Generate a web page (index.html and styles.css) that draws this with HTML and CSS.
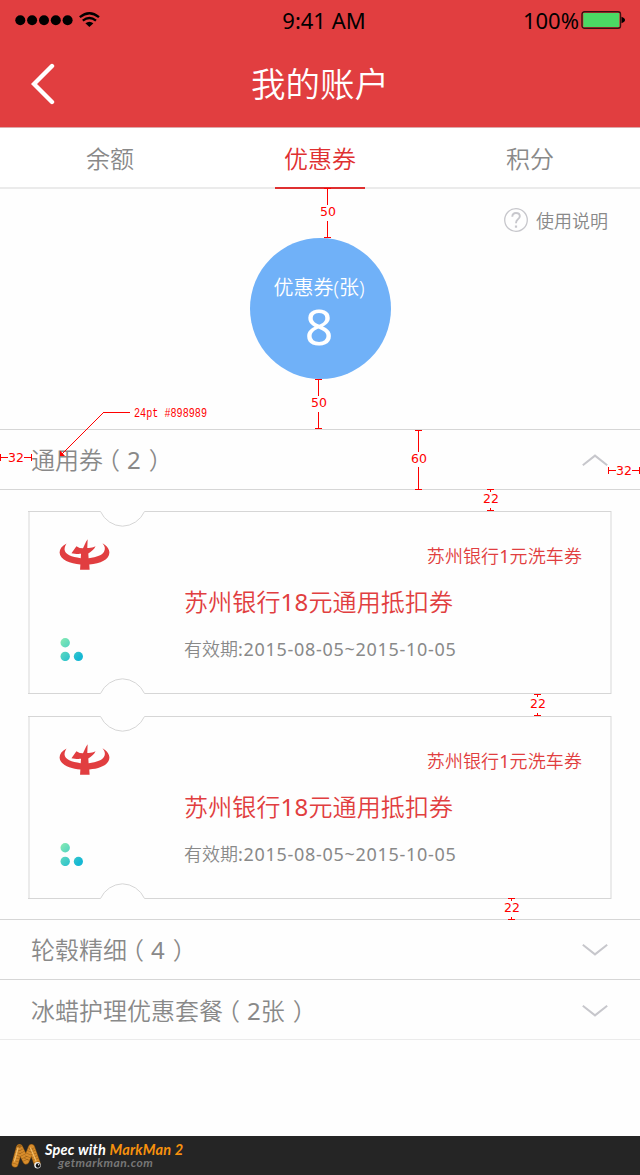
FILE: index.html
```html
<!DOCTYPE html>
<html lang="zh-CN">
<head>
<meta charset="utf-8">
<title>我的账户</title>
<link rel="stylesheet" href="styles.css">
</head>
<body>
<svg class="defs" width="0" height="0" aria-hidden="true">
  <defs>
    <linearGradient id="dotGradient" gradientUnits="userSpaceOnUse" x1="2" y1="2" x2="20" y2="20">
      <stop offset="0" stop-color="#81e8b4"/><stop offset="1" stop-color="#16b8d4"/>
    </linearGradient>
    <symbol id="bank" viewBox="118 116 153 94">
      <path fill="#e13e40" d="M140 130C126 137 119 147 119 157C119 178 152 192 182 193L181 209H210L209 193C243 191 270 178 270 157C270 147 262 136 249 129C257 139 258 146 254 154C249 165 232 171 207 174L206 160C215 155 224 147 228 138C220 142 212 144 203 143L204 117C198 125 195 134 190 144L180 143L170 138L155 159C163 161 175 162 184 161L183 174C155 171 135 162 134 148C134 141 137 135 140 130Z"/>
    </symbol>
    <symbol id="dots" viewBox="0 0 24 24">
      <g fill="url(#dotGradient)"><circle cx="5.2" cy="5.8" r="4.7"/><circle cx="5.2" cy="19.4" r="4.7"/><circle cx="18.4" cy="19.4" r="4.6"/></g>
    </symbol>
    <symbol id="ticket" viewBox="0 0 584 183">
      <path fill="none" stroke="#ebebeb" stroke-width="2" d="M1 0V183M583 0V183"/>
      <path fill="none" stroke="#d6d6d6" d="M0 .5H72.5A25 25 0 0 0 94.5 15.2A25 25 0 0 0 116.5 .5H583M0 182.5H72.5A25 25 0 0 1 94.5 167.8A25 25 0 0 1 116.5 182.5H583"/>
    </symbol>
    <symbol id="chevron" viewBox="0 0 26 12">
      <path fill="none" stroke="#c7c7cc" stroke-width="2" d="M.8 .8L13 10.4L25.2 .8"/>
    </symbol>
  </defs>
</svg>
<div class="page">
  <header class="header">
    <div class="status">
      <svg class="signal" width="86" height="20" viewBox="0 0 86 20">
        <g><circle cx="5.3" cy="10.3" r="5"/><circle cx="17.1" cy="10.3" r="5"/><circle cx="29" cy="10.3" r="5"/><circle cx="40.8" cy="10.3" r="5"/><circle cx="52.6" cy="10.3" r="5"/></g>
        <g fill="none" stroke="#000" stroke-width="2.3"><path d="M64.8 7.2Q74.4 -.8 84 7.2"/><path d="M67.8 10.7Q74.4 5.2 81 10.7"/></g>
        <path d="M70.4 13.3Q74.4 10.2 78.4 13.3L74.4 17Z"/>
      </svg>
      <span class="clock">9:41 AM</span>
      <span class="power"><span class="percent">100%</span><svg width="44" height="18" viewBox="0 0 44 18"><rect x="1" y=".8" width="38.5" height="16.4" rx="2.5" fill="none" stroke="#3a1012" stroke-width="1.4"/><rect x="2.3" y="2" width="36" height="14" fill="#4cd964"/><path d="M40.5 5.8Q44 7 44 9Q44 11 40.5 12.2Z"/></svg></span>
    </div>
    <div class="titlebar">
      <svg class="back" width="24" height="42" viewBox="0 0 24 42"><path fill="none" stroke="#fff" stroke-width="4.4" stroke-linecap="round" d="M21 3L3 21L21 39"/></svg>
      <h1 class="title">我的账户</h1>
    </div>
  </header>
  <nav class="tabs">
    <a class="tab">余额</a><a class="tab active"><span class="tab-label">优惠券</span></a><a class="tab">积分</a>
  </nav>
  <section class="summary">
    <div class="help">
      <svg width="24" height="24" viewBox="0 0 24 24"><circle cx="12" cy="12" r="11.3" fill="none" stroke="#c7c7cc" stroke-width="1.3"/><path d="M8.3 8.7Q8.5 5 12 5Q15.8 5 15.8 8.3Q15.8 10 13.7 11.5Q12 12.8 12 15.3" fill="none" stroke="#c7c7cc" stroke-width="1.9"/><rect x="10.9" y="17.5" width="2.2" height="2.2" fill="#c7c7cc"/></svg>
      <span class="help-label">使用说明</span>
    </div>
    <div class="bubble"><span class="bubble-label">优惠券(张)</span><span class="bubble-count">8</span></div>
  </section>
  <section class="group">
    <div class="row"><span class="row-label">通用券<i class="open">（</i><span class="num">2</span><i class="close">）</i></span><svg class="chevron up"><use href="#chevron"/></svg></div>
    <div class="tickets">
      <article class="ticket">
        <svg class="ticket-edge"><use href="#ticket"/></svg>
        <div class="marks"><svg class="bank"><use href="#bank"/></svg><svg class="dots"><use href="#dots"/></svg></div>
        <div class="info"><p class="tag">苏州银行<span class="num">1</span>元洗车券</p><h2 class="name">苏州银行<span class="num">18</span>元通用抵扣券</h2><p class="date">有效期<span class="num range">:2015-08-05~2015-10-05</span></p></div>
      </article>
      <article class="ticket">
        <svg class="ticket-edge"><use href="#ticket"/></svg>
        <div class="marks"><svg class="bank"><use href="#bank"/></svg><svg class="dots"><use href="#dots"/></svg></div>
        <div class="info"><p class="tag">苏州银行<span class="num">1</span>元洗车券</p><h2 class="name">苏州银行<span class="num">18</span>元通用抵扣券</h2><p class="date">有效期<span class="num range">:2015-08-05~2015-10-05</span></p></div>
      </article>
    </div>
    <div class="row"><span class="row-label">轮毂精细<i class="open">（</i><span class="num">4</span><i class="close">）</i></span><svg class="chevron"><use href="#chevron"/></svg></div>
    <div class="row last"><span class="row-label">冰蜡护理优惠套餐<i class="open">（</i><span class="num">2</span>张<i class="close">）</i></span><svg class="chevron"><use href="#chevron"/></svg></div>
  </section>
  <footer class="footer">
    <svg class="worm" width="32" height="28" viewBox="0 0 32 28">
      <g fill="none" stroke-linecap="round" stroke-linejoin="round">
        <path stroke="#8a5512" stroke-width="7" d="M4 21L8.5 4.5L15 18L20.5 4.5L26 20"/>
        <path stroke="#d88d2c" stroke-width="5.8" d="M4 21L8.5 4.5L15 18L20.5 4.5L26 20"/>
        <path stroke="#a0651a" stroke-width="5.6" stroke-linecap="butt" stroke-dasharray=".6 2.2" d="M4 21L8.5 4.5L15 18L20.5 4.5L26 20"/>
        <path stroke="#f2bd68" stroke-width="1.2" d="M3.5 18L7 5M19.5 5L25 18"/>
      </g>
      <circle cx="26.5" cy="22.3" r="3.2" fill="#eee"/><circle cx="27" cy="22.5" r="2.2" fill="#111"/><circle cx="27.6" cy="21.8" r=".7" fill="#fff"/>
    </svg>
    <div class="brand"><span class="brand-main">Spec with <b>MarkMan 2</b></span><span class="brand-site">getmarkman.com</span></div>
  </footer>
  <svg class="measures" width="640" height="1175" viewBox="0 0 640 1175">
    <g fill="none" stroke="#f00" stroke-width="1">
      <path d="M324 188.5h7M327.5 188V205M327.5 221V238M324 237.5h7"/>
      <path d="M315 379.5h7M318.5 379V396M318.5 412V429M315 428.5h7"/>
      <path d="M415 430.5h7M418.5 430V452M418.5 467V489M415 489.5h7"/>
      <path d="M487 489.5h7M490.5 489V492M490.5 508V511M487 510.5h7"/>
      <path d="M608.5 467v7M608 470.5H616M632 470.5H640M639.5 467v7"/>
      <path d="M.5 454v7M0 457.5H8M24 457.5H32M31.5 454v7"/>
      <path d="M534 694.5h7M537.5 694V697M537.5 713V716M534 715.5h7"/>
      <path d="M508 898.5h7M511.5 898V901M511.5 917V920M508 919.5h7"/>
      <path d="M130 412.5H103"/>
    </g>
    <path fill="none" stroke="#f00" d="M103.5 412.5L61 455"/>
    <path fill="#f00" d="M60 450.5L65 456H60Z"/>
    <g class="measure-text">
      <text x="320" y="216">50</text><text x="311" y="407">50</text><text x="411" y="463">60</text>
      <text x="483" y="503">22</text><text x="616" y="474.5">32</text><text x="8" y="461.5">32</text>
      <text x="530" y="708">22</text><text x="504" y="912">22</text>
    </g>
    <text class="note" x="134" y="417" textLength="73" lengthAdjust="spacingAndGlyphs">24pt #898989</text>
  </svg>
</div>
</body>
</html>
```
FILE: styles.css
```css
* { box-sizing: border-box; }
body { margin: 0; }
h1, h2, p { margin: 0; font-weight: inherit; }
i { font-style: normal; }
svg { display: block; flex: none; }
.defs { position: absolute; }

.page {
  position: relative;
  display: flex;
  flex-direction: column;
  width: 640px;
  height: 1175px;
  background: #fefefe;
  color: #898989;
  font-family: "Noto Sans", "Noto Sans CJK SC", sans-serif;
  font-weight: 350;
  overflow: hidden;
}
.num { font-weight: 400; }

.header { height: 128px; background: #e13e40; border-bottom: 1px solid #dcaaab; }
.status {
  display: grid;
  grid-template-columns: 1fr auto 1fr;
  align-items: center;
  height: 40px;
  padding: 0 15px;
  color: #000;
  font-size: 22px;
  font-weight: 400;
}
.clock { padding: 0 0 1px 8px; }
.percent { padding-bottom: 1px; }
.power { display: flex; justify-content: flex-end; align-items: center; gap: 2px; }
.titlebar { display: grid; grid-template-columns: 24px 1fr 24px; align-items: center; height: 87px; padding: 0 31px; }
.title { padding-top: 1px; text-align: center; color: #fff; font-size: 34.5px; line-height: 50px; }

.tabs { display: flex; height: 61px; padding: 0 5px; border-bottom: 2px solid #ebebeb; background: #fff; }
.tab { flex: 1; display: flex; justify-content: center; font-size: 24px; line-height: 62px; }
.tab-label { width: 90px; height: 61px; text-align: center; color: #df3031; border-bottom: 2px solid #df3031; }

.summary { display: flex; flex-direction: column; align-items: center; height: 240px; padding: 18px 32px 0; }
.help { display: flex; align-self: flex-end; align-items: center; gap: 8px; height: 26px; font-size: 18px; }
.help-label { padding-bottom: 1px; }
.bubble {
  display: flex;
  flex-direction: column;
  align-items: center;
  width: 141px;
  height: 141px;
  margin-top: 5px;
  padding: 36px 2px 0 0;
  border-radius: 50%;
  background: #70b1f8;
  color: #fff;
}
.bubble-label { font-size: 20px; line-height: 28px; }
.bubble-count { font-size: 50px; line-height: 48px; font-weight: 400; }

.row {
  display: flex;
  justify-content: space-between;
  align-items: center;
  height: 60px;
  padding: 0 32px 0 31px;
  border-top: 1px solid #d6d6d6;
  font-size: 24px;
}
.row-label { padding-bottom: 2px; }
.open, .close { font-feature-settings: "halt"; }
.open { padding: 0 7px 0 5px; }
.close { padding-left: 8px; }
.row.last { height: 61px; border-bottom: 1px solid #ebebeb; }
.row.last .row-label { padding-bottom: 0; }
.row.last .chevron { margin-top: 2px; }
.chevron { width: 26px; height: 12px; }
.chevron.up { transform: scaleY(-1); }

.tickets { display: flex; flex-direction: column; gap: 22px; padding: 21px 28px; border-top: 1px solid #d6d6d6; height: 430px; }
.ticket { position: relative; display: flex; width: 584px; height: 183px; padding: 28px 30px 0 32px; }
.ticket-edge { position: absolute; inset: 0; width: 584px; height: 183px; }
.marks { display: flex; flex-direction: column; gap: 67px; width: 124px; }
.bank { width: 51px; height: 31px; margin-left: -1px; }
.dots { width: 24px; height: 24px; }
.info { flex: 1; display: flex; flex-direction: column; padding-top: 5px; }
.tag { align-self: flex-end; color: #e13e40; font-size: 18px; line-height: 24px; letter-spacing: .1px; }
.name { margin-top: 17px; color: #e13e40; font-size: 24px; line-height: 34px; letter-spacing: .15px; }
.date { margin-top: 18px; font-size: 18px; line-height: 24px; }
.range { letter-spacing: .7px; }

.footer { display: flex; gap: 2px; height: 39px; margin-top: auto; padding: 6px 0 0 11px; background: #252525; }
.worm { margin-top: 1px; }
.brand { display: flex; flex-direction: column; font-family: Lato, sans-serif; font-style: italic; font-weight: 700; }
.brand-main { color: #fff; font-size: 14.5px; line-height: 15px; letter-spacing: .2px; }
.brand-main b { color: #f7910d; font-weight: 700; }
.brand-site { padding-left: 13px; color: #777; font-size: 12px; line-height: 12px; letter-spacing: .5px; }

.measures { position: absolute; inset: 0; }
.measure-text { fill: #f00; font: 400 12.5px "DejaVu Sans", sans-serif; }
.note { fill: #f00; font: 400 12px "Liberation Mono", monospace; }
```
